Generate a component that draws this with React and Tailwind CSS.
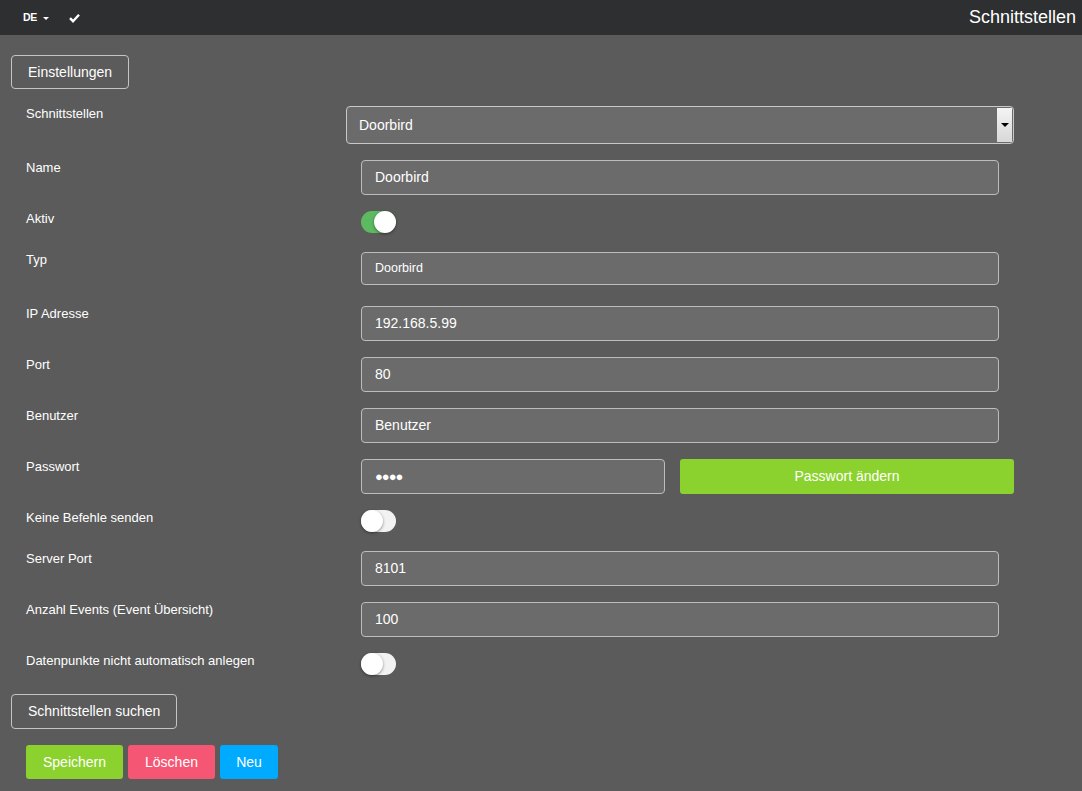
import { useState } from "react";

function Toggle({ on }) {
  return (
    <div
      className={`relative h-[22px] w-[35px] rounded-full ${on ? "bg-[#5dba60]" : "bg-[#f2f2f2]"}`}
    >
      <div
        className={`absolute top-0 h-[22px] w-[22px] rounded-full bg-white shadow-[0_1px_3px_rgba(0,0,0,0.45)] ${
          on ? "left-[13px]" : "left-0"
        }`}
      />
    </div>
  );
}

function Field({ value, small }) {
  return (
    <div
      className={`flex items-center rounded-[4px] border border-[#bdbdbd] bg-[#6b6b6b] pl-[13px] text-white ${
        small ? "h-[33px] text-[12.5px]" : "h-[35px] text-[14px]"
      }`}
    >
      {value}
    </div>
  );
}

function Row({ label, children, className = "" }) {
  return (
    <div className={`flex ${className}`}>
      <div className="w-[335px] shrink-0 pl-[15px] text-[13px] leading-4 text-white">{label}</div>
      <div className="flex-1 pl-[15px] pr-[15px]">{children}</div>
    </div>
  );
}

export default function App() {
  const [iface] = useState("Doorbird");

  return (
    <div className="min-h-[791px] bg-[#5b5b5b] font-['Liberation_Sans',Arial,sans-serif] text-white">
      <div className="flex h-[35px] items-center justify-between bg-[#2e2f31] pl-[23px] pr-[6px]">
        <div className="flex items-center">
          <span className="text-[10.5px] font-bold tracking-tight">DE</span>
          <span className="ml-[6px] mt-[1px] h-0 w-0 border-x-[3px] border-t-[3px] border-x-transparent border-t-white" />
          <svg className="ml-[20px]" width="11" height="10" viewBox="0 0 11 10">
            <path d="M1 5.2 L4 8.2 L10 1.8" fill="none" stroke="white" strokeWidth="2.4" />
          </svg>
        </div>
        <div className="text-[18px]">Schnittstellen</div>
      </div>

      <div className="px-[11px] pt-[20px]">
        <button className="h-[34px] rounded-[4px] border border-[#c4c4c4] px-[16px] text-[14px]">
          Einstellungen
        </button>

        <div className="mt-[17px] w-[1003px]">
          <div className="flex">
            <div className="w-[335px] shrink-0 pl-[15px] text-[13px] leading-4">Schnittstellen</div>
            <div className="relative flex h-[38px] flex-1 items-center rounded-[4px] border border-[#c8c8c8] bg-[#6b6b6b] pl-[12px] text-[14px]">
              {iface}
              <div className="absolute right-[1px] top-[1px] flex h-[34px] w-[15px] items-center justify-center bg-gradient-to-b from-[#f4f4f4] to-[#d8d8d8]">
                <span className="h-0 w-0 border-x-[4px] border-t-[4px] border-x-transparent border-t-black" />
              </div>
            </div>
          </div>

          <Row label="Name" className="mt-[16px]">
            <Field value="Doorbird" />
          </Row>
          <Row label="Aktiv" className="mt-[16px]">
            <Toggle on />
          </Row>
          <Row label="Typ" className="mt-[19px]">
            <Field value="Doorbird" small />
          </Row>
          <Row label="IP Adresse" className="mt-[21px]">
            <Field value="192.168.5.99" />
          </Row>
          <Row label="Port" className="mt-[16px]">
            <Field value="80" />
          </Row>
          <Row label="Benutzer" className="mt-[16px]">
            <Field value="Benutzer" />
          </Row>
          <div className="mt-[16px] flex">
            <div className="w-[335px] shrink-0 pl-[15px] text-[13px] leading-4">Passwort</div>
            <div className="flex flex-1 gap-[15px] pl-[15px]">
              <div className="w-[304px]">
                <Field value={<span className="text-[13px] tracking-[-1px]">●●●●</span>} />
              </div>
              <button className="h-[35px] flex-1 rounded-[3px] bg-[#8bd22e] text-[14px]">Passwort ändern</button>
            </div>
          </div>
          <Row label="Keine Befehle senden" className="mt-[16px]">
            <Toggle />
          </Row>
          <Row label="Server Port" className="mt-[19px]">
            <Field value="8101" />
          </Row>
          <Row label="Anzahl Events (Event Übersicht)" className="mt-[16px]">
            <Field value="100" />
          </Row>
          <Row label="Datenpunkte nicht automatisch anlegen" className="mt-[16px]">
            <Toggle />
          </Row>
        </div>

        <button className="mt-[19px] h-[35px] rounded-[4px] border border-[#c4c4c4] px-[16px] text-[14px]">
          Schnittstellen suchen
        </button>

        <div className="mt-[16px] flex gap-[5px] pl-[15px]">
          <button className="h-[34px] w-[97px] rounded-[3px] bg-[#8bd22e] text-[14px]">Speichern</button>
          <button className="h-[34px] w-[87px] rounded-[3px] bg-[#f55673] text-[14px]">Löschen</button>
          <button className="h-[34px] w-[58px] rounded-[3px] bg-[#00aaff] text-[14px]">Neu</button>
        </div>
      </div>
    </div>
  );
}
